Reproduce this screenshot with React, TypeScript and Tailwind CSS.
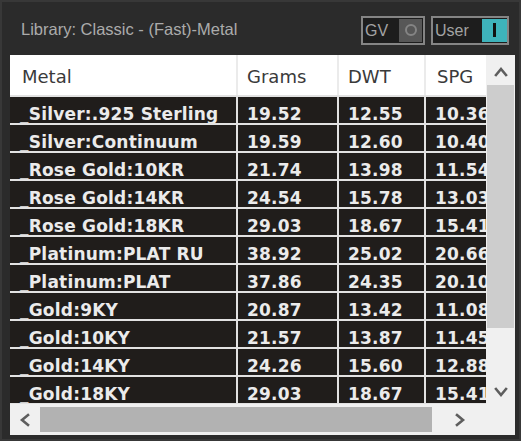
import React from "react";

const rows: [string, string, string, string][] = [
  ["_Silver:.925 Sterling", "19.52", "12.55", "10.36"],
  ["_Silver:Continuum", "19.59", "12.60", "10.40"],
  ["_Rose Gold:10KR", "21.74", "13.98", "11.54"],
  ["_Rose Gold:14KR", "24.54", "15.78", "13.03"],
  ["_Rose Gold:18KR", "29.03", "18.67", "15.41"],
  ["_Platinum:PLAT RU", "38.92", "25.02", "20.66"],
  ["_Platinum:PLAT", "37.86", "24.35", "20.10"],
  ["_Gold:9KY", "20.87", "13.42", "11.08"],
  ["_Gold:10KY", "21.57", "13.87", "11.45"],
  ["_Gold:14KY", "24.26", "15.60", "12.88"],
  ["_Gold:18KY", "29.03", "18.67", "15.41"],
];

const Chevron = ({ dir }: { dir: "up" | "down" | "left" | "right" }) => {
  const pts: Record<string, string> = {
    up: "2,9 7,3 12,9",
    down: "2,3 7,9 12,3",
    left: "9,2 3,7 9,12",
    right: "3,2 9,7 3,12",
  };
  const w = dir === "up" || dir === "down" ? 14 : 12;
  const h = dir === "up" || dir === "down" ? 12 : 14;
  return (
    <svg width={w} height={h} viewBox={`0 0 ${w} ${h}`}>
      <polyline
        points={pts[dir]}
        fill="none"
        stroke="#5e5e5e"
        strokeWidth="2.6"
        strokeLinecap="square"
        strokeLinejoin="miter"
      />
    </svg>
  );
};

export default function App() {
  const sans = { fontFamily: '"Liberation Sans", Arial, sans-serif' };
  const dv = { fontFamily: '"DejaVu Sans", Verdana, sans-serif' };
  return (
    <div className="w-[521px] h-[441px] bg-[#2b2b2b] shadow-[inset_0_0_0_2px_#383838] flex flex-col overflow-hidden">
      {/* Top bar */}
      <div className="h-[55px] flex items-center justify-between pl-[21px] pr-[12px]">
        <div className="text-[16.5px] text-[#ababab] mt-[3px]" style={sans}>
          Library: Classic - (Fast)-Metal
        </div>
        <div className="flex items-center gap-[6px] mt-[5px]">
          <div className="w-[64px] h-[29px] border-2 border-[#858585] bg-[#1d1d1d] flex items-center justify-between pl-[2px] pr-[1px]">
            <span className="text-[16px] text-[#a3a3a3] leading-none pt-[2px]" style={sans}>GV</span>
            <div className="w-[23px] h-[23px] bg-[#575757] flex items-center justify-center">
              <div className="w-[12px] h-[12px] rounded-full border-2 border-[#858585]" />
            </div>
          </div>
          <div className="w-[78px] h-[29px] border-2 border-[#858585] bg-[#1d1d1d] flex items-center justify-between pl-[2px] pr-[0px]">
            <span className="text-[16px] text-[#a3a3a3] leading-none pt-[2px]" style={sans}>User</span>
            <div className="w-[25px] h-[23px] bg-[#3eb3bb] flex items-center justify-center">
              <div className="w-[3px] h-[14px] bg-[#111]" />
            </div>
          </div>
        </div>
      </div>

      {/* Panel */}
      <div className="ml-[10px] w-[505px] h-[380px] grid grid-cols-[476px_29px] grid-rows-[349px_31px]">
        {/* Table */}
        <div className="bg-[#e2e2e2] flex flex-col gap-[2px] overflow-hidden">
          <div className="h-[40px] shrink-0 grid grid-cols-[226px_99px_85px_60px] gap-x-[2px] bg-[#ebebeb]">
            {["Metal", "Grams", "DWT", "SPG"].map((h, i) => (
              <div
                key={h}
                className={`bg-white flex items-center pt-[3px] text-[18px] text-[#3a3a3a] ${i === 0 ? "pl-[12px]" : i === 3 ? "pl-[11px]" : "pl-[9px]"}`}
                style={dv}
              >
                {h}
              </div>
            ))}
          </div>
          {rows.map((r) => (
            <div key={r[0]} className="h-[26px] shrink-0 grid grid-cols-[226px_99px_85px_60px] gap-x-[2px]">
              {r.map((c, i) => (
                <div
                  key={i}
                  className={`bg-[#201d1b] overflow-hidden whitespace-nowrap text-[17px] leading-[20px] font-bold tracking-[0.2px] text-[#ebebeb] pt-[7px] ${i === 0 ? "pl-[10px]" : "pl-[9px]"}`}
                  style={dv}
                >
                  {c}
                </div>
              ))}
            </div>
          ))}
        </div>

        {/* Vertical scrollbar */}
        <div className="bg-[#f0f0f0] flex flex-col">
          <div className="h-[30px] flex items-center justify-center pt-[3px]">
            <Chevron dir="up" />
          </div>
          <div className="h-[243px] mx-[1px] bg-[#cdcdcd]" />
          <div className="flex-1 flex items-end justify-center pb-[6px]">
            <Chevron dir="down" />
          </div>
        </div>

        {/* Horizontal scrollbar */}
        <div className="bg-[#f0f0f0] flex items-center">
          <div className="w-[30px] h-full flex items-center justify-center">
            <Chevron dir="left" />
          </div>
          <div className="w-[392px] h-[25px] bg-[#b2b2b2]" />
          <div className="flex-1 h-full flex items-center justify-center pl-[2px]">
            <Chevron dir="right" />
          </div>
        </div>
        <div className="bg-[#f0f0f0]" />
      </div>
    </div>
  );
}
